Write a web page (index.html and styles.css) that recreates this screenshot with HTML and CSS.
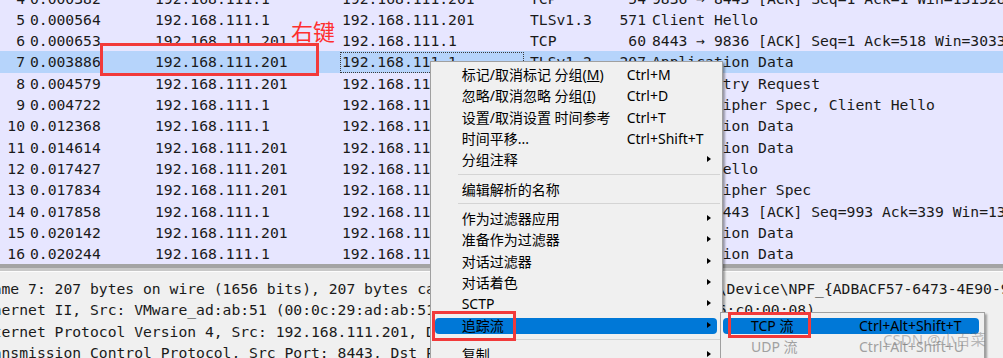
FILE: index.html
```html
<!DOCTYPE html>
<html lang="zh-CN">

<head>
    <meta charset="UTF-8">
    <title>Wireshark - 追踪流</title>
    <link rel="stylesheet" href="styles.css">
</head>

<body>
    <div class="window">
        <div class="packet-list">
            <div class="rows">
                <div class="row"><span class="num">4</span><span class="time">0.000382</span><span class="src">192.168.111.1</span><span class="dst">192.168.111.201</span><span class="proto">TCP</span><span class="len">54</span><span class="info">9836 → 8443 [ACK] Seq=1 Ack=1 Win=131328 Len=0</span></div>
                <div class="row"><span class="num">5</span><span class="time">0.000564</span><span class="src">192.168.111.1</span><span class="dst">192.168.111.201</span><span class="proto">TLSv1.3</span><span class="len">571</span><span class="info">Client Hello</span></div>
                <div class="row"><span class="num">6</span><span class="time">0.000653</span><span class="src">192.168.111.201</span><span class="dst">192.168.111.1</span><span class="proto">TCP</span><span class="len">60</span><span class="info">8443 → 9836 [ACK] Seq=1 Ack=518 Win=30336 Len=0</span></div>
                <div class="row selected"><span class="num">7</span><span class="time">0.003886</span><span class="src">192.168.111.201</span><span class="dst focus">192.168.111.1</span><span class="proto">TLSv1.2</span><span class="len">207</span><span class="info">Application Data</span></div>
                <div class="row"><span class="num">8</span><span class="time">0.004579</span><span class="src">192.168.111.201</span><span class="dst">192.168.111.1</span><span class="proto">TLSv1.3</span><span class="len">1494</span><span class="info">Hello Retry Request</span></div>
                <div class="row"><span class="num">9</span><span class="time">0.004722</span><span class="src">192.168.111.1</span><span class="dst">192.168.111.201</span><span class="proto">TLSv1.3</span><span class="len">577</span><span class="info">Change Cipher Spec, Client Hello</span></div>
                <div class="row"><span class="num">10</span><span class="time">0.012368</span><span class="src">192.168.111.1</span><span class="dst">192.168.111.201</span><span class="proto">TLSv1.2</span><span class="len">207</span><span class="info">Application Data</span></div>
                <div class="row"><span class="num">11</span><span class="time">0.014614</span><span class="src">192.168.111.201</span><span class="dst">192.168.111.1</span><span class="proto">TLSv1.2</span><span class="len">207</span><span class="info">Application Data</span></div>
                <div class="row"><span class="num">12</span><span class="time">0.017427</span><span class="src">192.168.111.201</span><span class="dst">192.168.111.1</span><span class="proto">TLSv1.3</span><span class="len">1484</span><span class="info">Server Hello</span></div>
                <div class="row"><span class="num">13</span><span class="time">0.017834</span><span class="src">192.168.111.201</span><span class="dst">192.168.111.1</span><span class="proto">TLSv1.3</span><span class="len">60</span><span class="info">Change Cipher Spec</span></div>
                <div class="row"><span class="num">14</span><span class="time">0.017858</span><span class="src">192.168.111.1</span><span class="dst">192.168.111.201</span><span class="proto">TCP</span><span class="len">54</span><span class="info">9836 → 8443 [ACK] Seq=993 Ack=339 Win=131072 Len=0</span></div>
                <div class="row"><span class="num">15</span><span class="time">0.020142</span><span class="src">192.168.111.201</span><span class="dst">192.168.111.1</span><span class="proto">TLSv1.3</span><span class="len">124</span><span class="info">Application Data</span></div>
                <div class="row"><span class="num">16</span><span class="time">0.020244</span><span class="src">192.168.111.1</span><span class="dst">192.168.111.201</span><span class="proto">TLSv1.3</span><span class="len">133</span><span class="info">Application Data</span></div>
                <div class="row"><span class="num">17</span><span class="time">0.020351</span><span class="src">192.168.111.201</span><span class="dst">192.168.111.1</span><span class="proto">TCP</span><span class="len">60</span><span class="info">8443 → 9836 [ACK] Seq=409 Ack=1072 Win=30336 Len=0</span></div>
            </div>
        </div>

        <div class="splitter"></div>

        <div class="detail-pane">
            <div class="tree-line">Frame 7: 207 bytes on wire (1656 bits), 207 bytes captured (1656 bits) on interface \Device\NPF_{ADBACF57-6473-4E90-9B0D-2A7B4E5C1F32}, id 0</div>
            <div class="tree-line">Ethernet II, Src: VMware_ad:ab:51 (00:0c:29:ad:ab:51), Dst: VMware_c0:00:08 (00:50:56:c0:00:08)</div>
            <div class="tree-line">Internet Protocol Version 4, Src: 192.168.111.201, Dst: 192.168.111.1</div>
            <div class="tree-line">Transmission Control Protocol, Src Port: 8443, Dst Port: 9836, Seq: 1, Ack: 518, Len: 153</div>
        </div>

        <div class="context-menu">
            <div class="menu-item"><span class="label">标记/取消标记 分组(<u>M</u>)</span><span class="key">Ctrl+M</span></div>
            <div class="menu-item"><span class="label">忽略/取消忽略 分组(<u>I</u>)</span><span class="key">Ctrl+D</span></div>
            <div class="menu-item"><span class="label">设置/取消设置 时间参考</span><span class="key">Ctrl+T</span></div>
            <div class="menu-item"><span class="label">时间平移...</span><span class="key">Ctrl+Shift+T</span></div>
            <div class="menu-item has-sub"><span class="label">分组注释</span></div>
            <div class="menu-sep"></div>
            <div class="menu-item"><span class="label">编辑解析的名称</span></div>
            <div class="menu-sep"></div>
            <div class="menu-item has-sub"><span class="label">作为过滤器应用</span></div>
            <div class="menu-item has-sub"><span class="label">准备作为过滤器</span></div>
            <div class="menu-item has-sub"><span class="label">对话过滤器</span></div>
            <div class="menu-item has-sub"><span class="label">对话着色</span></div>
            <div class="menu-item has-sub"><span class="label">SCTP</span></div>
            <div class="menu-item has-sub active"><span class="label">追踪流</span></div>
            <div class="menu-sep"></div>
            <div class="menu-item has-sub"><span class="label">复制</span></div>
            <div class="menu-item has-sub"><span class="label">协议首选项</span></div>
        </div>

        <div class="sub-menu">
            <div class="menu-item active"><span class="label">TCP 流</span><span class="key">Ctrl+Alt+Shift+T</span></div>
            <div class="menu-item disabled"><span class="label">UDP 流</span><span class="key">Ctrl+Alt+Shift+U</span></div>
            <div class="menu-item disabled"><span class="label">DCCP 流</span><span class="key">Ctrl+Alt+Shift+E</span></div>
            <div class="menu-item"><span class="label">TLS 流</span><span class="key">Ctrl+Alt+Shift+S</span></div>
        </div>

        <div class="mark mark-row"></div>
        <div class="mark-label">右键</div>
        <div class="mark mark-follow"></div>
        <div class="mark mark-tcp"></div>
        <div class="watermark">CSDN @小百菜</div>
    </div>
</body>

</html>
```

FILE: styles.css
```css
body {
    margin: 0;
    background-color: #f0f0f0;
    overflow: hidden;
}

.window {
    position: relative;
    width: 1003px;
    height: 358px;
    overflow: hidden;
    display: flex;
    flex-direction: column;
    font-family: 'DejaVu Sans Mono', monospace;
    font-size: 14.7px;
    color: #1a1a1a;
}

/* packet list */

.packet-list {
    flex: none;
    height: 264px;
    overflow: hidden;
    background-color: #e7e6ff;
}

.rows {
    margin-top: -12.5px;
}

.row {
    display: grid;
    grid-template-columns: 25px 130px 185px 190px 72px 44px 1fr;
    height: 21.33px;
    line-height: 21.33px;
    white-space: nowrap;
}

.row span {
    min-width: 0;
}

.row.selected {
    background-color: #b6d4fb;
}

.num {
    text-align: right;
}

.time {
    padding-left: 5px;
}

.dst {
    padding-left: 2px;
}

.dst.focus {
    position: relative;
}

.dst.focus::after {
    content: "";
    position: absolute;
    left: 0;
    top: 1px;
    right: 6px;
    bottom: 0;
    border: 1px dotted #3a3a3a;
}

.len {
    text-align: right;
}

.info {
    padding-left: 6px;
}

.splitter {
    flex: none;
    height: 8px;
    background: linear-gradient(#a4a4a4 0 4px, #c8c8c8 4px 7px, #fdfdfd 7px 8px);
}

/* packet details */

.detail-pane {
    flex: 1;
    background-color: #f0f0f0;
    padding-top: 6px;
}

.tree-line {
    height: 21.33px;
    line-height: 21.33px;
    white-space: nowrap;
    margin-left: -25px;
}

/* context menu */

.context-menu,
.sub-menu {
    position: absolute;
    box-sizing: border-box;
    background-color: #f0f0f0;
    border: 1px solid #a0a0a0;
    box-shadow: 2px 2px 2px rgba(0, 0, 0, 0.35);
    font-family: 'Noto Sans', 'Noto Sans CJK SC', sans-serif;
    font-size: 14px;
    color: #000;
}

.context-menu {
    left: 430px;
    top: 61px;
    width: 293px;
    padding: 2px 0 20px;
}

.sub-menu {
    left: 720px;
    top: 312px;
    width: 265px;
    padding: 2px 0 10px;
}

.menu-item {
    position: relative;
    isolation: isolate;
    display: flex;
    align-items: center;
    height: 21.33px;
    line-height: 21.33px;
    padding-left: 30.7px;
    white-space: nowrap;
}

.context-menu .label {
    width: 165px;
}

.sub-menu .menu-item {
    padding-left: 30px;
}

.sub-menu .label {
    width: 108px;
}

.menu-item.has-sub::after {
    content: "";
    position: absolute;
    right: 11px;
    top: 7px;
    border-left: 4px solid #000;
    border-top: 3.5px solid transparent;
    border-bottom: 3.5px solid transparent;
}

.menu-item.active::before {
    content: "";
    position: absolute;
    left: 4px;
    right: 5px;
    top: 3px;
    bottom: 2px;
    background-color: #0078d7;
    border-radius: 4px;
    z-index: -1;
}

.sub-menu .menu-item.active::before {
    left: 2px;
}

.menu-item.disabled {
    color: #a0a0a0;
}

.menu-sep {
    height: 1px;
    margin: 3.5px 2px 3.5px 27px;
    background-color: #d4d4d4;
}

/* annotations */

.mark {
    position: absolute;
    box-sizing: border-box;
    border: 3px solid #f23a3a;
}

.mark-row {
    left: 100px;
    top: 43px;
    width: 219px;
    height: 33px;
}

.mark-follow {
    left: 432px;
    top: 311px;
    width: 84px;
    height: 30px;
}

.mark-tcp {
    left: 728px;
    top: 312px;
    width: 83px;
    height: 26px;
}

.mark-label {
    position: absolute;
    left: 291px;
    top: 17px;
    font-family: 'Noto Sans CJK SC', sans-serif;
    font-size: 22px;
    line-height: 26px;
    color: #ff2f2f;
}

.watermark {
    position: absolute;
    left: 883px;
    top: 330px;
    font-family: 'Noto Sans', 'Noto Sans CJK SC', sans-serif;
    font-size: 15px;
    line-height: 18px;
    color: rgba(110, 110, 110, 0.45);
}
```
